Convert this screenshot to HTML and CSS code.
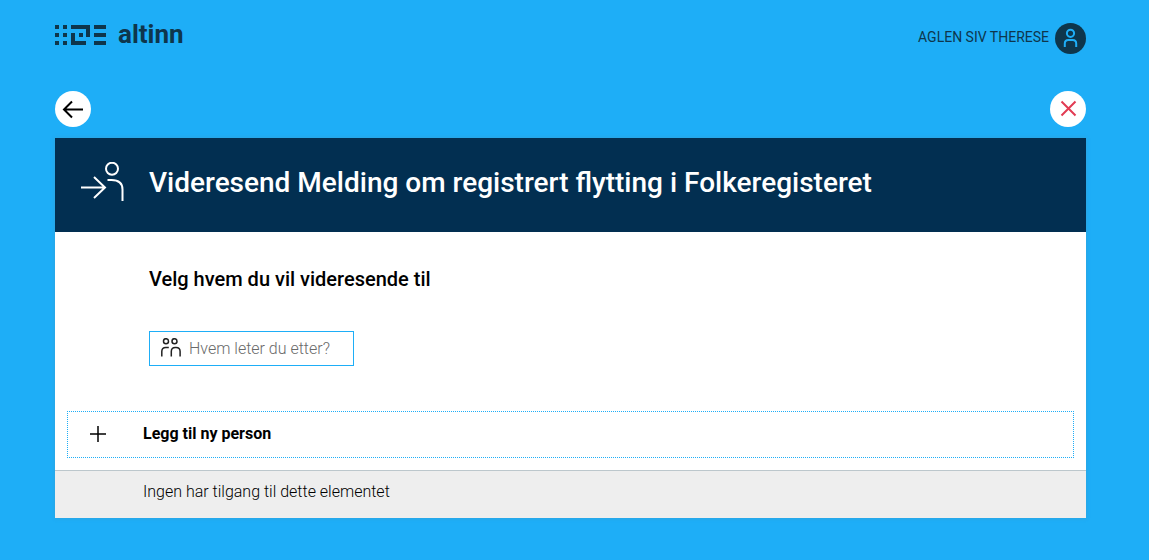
FILE: index.html
```html
<!DOCTYPE html>
<html lang="nb">
<head>
<meta charset="utf-8">
<meta name="viewport" content="width=device-width, initial-scale=1">
<title>Altinn - Videresend</title>
<link rel="stylesheet" href="styles.css">
</head>
<body>
<div class="page">
  <header class="topbar">
    <a class="brand" href="#">
      <svg class="brand-mark" viewBox="0 0 51 20" aria-hidden="true">
        <path d="M0 0h4v4H0zM0 8h4v4H0zM0 16h4v4H0zM8 0h4v4H8zM8 8h4v4H8zM8 16h4v4H8zM16 0h19v12h-4V4H16zM16 8h4v8h11v4H16zM24 8h4v4h-4zM39 0h12v4H39zM39 8h12v4H39zM39 16h12v4H39z"/>
      </svg>
      <span class="brand-name">altinn</span>
    </a>
    <a class="user" href="#">
      <span class="user-name">AGLEN SIV THERESE</span>
      <svg class="avatar" viewBox="0 0 31 31" aria-hidden="true">
        <circle class="avatar-disc" cx="15.500" cy="15.500" r="15.500"/>
        <circle class="avatar-line" cx="15.500" cy="10.300" r="3.600"/>
        <path class="avatar-line" d="M9.800 24v-3.500q0-3.500 3.500-3.500h4.400q3.500 0 3.500 3.500V24"/>
      </svg>
    </a>
  </header>
  <nav class="actions">
    <button class="round" type="button" aria-label="Tilbake">
      <svg viewBox="0 0 36 36"><path d="M28 18.500H9M17 10.500L9 18.500l8 8"/></svg>
    </button>
    <button class="round round-close" type="button" aria-label="Lukk">
      <svg viewBox="0 0 36 36"><path d="M11.500 10.500l14 14M25.500 10.500l-14 14"/></svg>
    </button>
  </nav>
  <main class="modal">
    <div class="modal-header">
      <svg class="forward" viewBox="0 0 44 40" aria-hidden="true">
        <path d="M0 25.500h24M13 15l11 10.500L13 36"/>
        <circle cx="31" cy="6.700" r="6"/>
        <path d="M26.500 18h4q11 0 11 9.500V39"/>
      </svg>
      <h1>Videresend Melding om registrert flytting i Folkeregisteret</h1>
    </div>
    <div class="modal-body">
      <h2><label for="who">Velg hvem du vil videresende til</label></h2>
      <div class="search">
        <svg class="people" viewBox="0 0 20 19" aria-hidden="true">
          <circle cx="5" cy="3.200" r="2.500"/>
          <circle cx="13.500" cy="3.200" r="2.500"/>
          <path d="M.8 18.500v-5q0-4 4-4h3M10.300 18.500v-5q0-4 4-4h.8q4 0 4 4v5"/>
        </svg>
        <input id="who" type="text" placeholder="Hvem leter du etter?">
      </div>
    </div>
    <button class="add" type="button">
      <svg class="plus" viewBox="0 0 16 16" aria-hidden="true"><path d="M8 0v16M0 8h16"/></svg>
      <span>Legg til ny person</span>
    </button>
    <p class="empty">Ingen har tilgang til dette elementet</p>
  </main>
</div>
</body>
</html>
```
FILE: styles.css
```css
* { box-sizing: border-box; }
body {
  margin: 0;
  background: #1eaef7;
  color: #000;
  font: 16px/24px Roboto, "Liberation Sans", sans-serif;
}
svg { display: block; fill: none; flex: none; }
a { color: inherit; text-decoration: none; }
button { font: inherit; color: inherit; cursor: pointer; }
.page { padding: 23px 63px 42px 55px; }
.topbar {
  display: flex;
  justify-content: space-between;
  align-items: flex-start;
  color: #0e364c;
}
.brand { display: flex; align-items: center; gap: 12px; }
.brand-mark { width: 51px; height: 20px; fill: #0e364c; }
.brand-name { font-size: 26px; line-height: 23px; font-weight: 700; }
.user { display: flex; align-items: center; gap: 6px; font-size: 14px; line-height: 24px; }
.user-name { padding-bottom: 4px; }
.avatar { width: 31px; height: 31px; }
.avatar-disc { fill: #0e364c; }
.avatar-line { stroke: #1eaef7; stroke-width: 2; }
.actions { display: flex; justify-content: space-between; margin: 37px 0 11px; }
.round {
  width: 36px;
  height: 36px;
  padding: 0;
  border: 0;
  border-radius: 50%;
  background: #fff;
}
.round svg { width: 36px; height: 36px; stroke: #000; stroke-width: 2; }
.round-close svg { stroke: #e23b53; }
.modal { background: #fff; box-shadow: 0 0 4px rgba(80, 140, 170, .4); }
.modal-header {
  display: flex;
  align-items: center;
  gap: 24px;
  min-height: 94px;
  padding: 22px 26px 26px;
  background: #022f51;
  color: #fff;
}
.forward { width: 44px; height: 40px; margin-bottom: 2px; stroke: #fff; stroke-width: 2; }
h1 { margin: 0; font-size: 28px; line-height: 36px; font-weight: 500; }
.modal-body { padding: 35px 94px 45px; }
h2 { margin: 0 0 39px; font-size: 20px; line-height: 25px; font-weight: 500; }
.search {
  display: flex;
  align-items: center;
  gap: 8px;
  width: 205px;
  height: 35px;
  padding: 0 11px;
  border: 1px solid #1eaef7;
}
.people { width: 20px; height: 19px; margin-bottom: 2px; stroke: #222; stroke-width: 1.5; }
.search input {
  flex: 1;
  min-width: 0;
  padding: 0;
  border: 0;
  outline: 0;
  background: transparent;
  font: 300 16px/24px Roboto, "Liberation Sans", sans-serif;
}
.search input::placeholder { color: #6a6a6a; opacity: 1; }
.add {
  display: flex;
  align-items: center;
  gap: 37px;
  width: calc(100% - 24px);
  min-height: 47px;
  margin: 0 12px 12px;
  padding: 0 22px 2px;
  border: 1px dotted #1eaef7;
  background: none;
  font-weight: 700;
  text-align: left;
}
.plus { width: 16px; height: 16px; stroke: #000; stroke-width: 1.5; }
.empty {
  margin: 0;
  padding: 9px 88px 14px;
  border-top: 1px solid #bcc7cc;
  background: #eee;
  font-weight: 300;
}
```
